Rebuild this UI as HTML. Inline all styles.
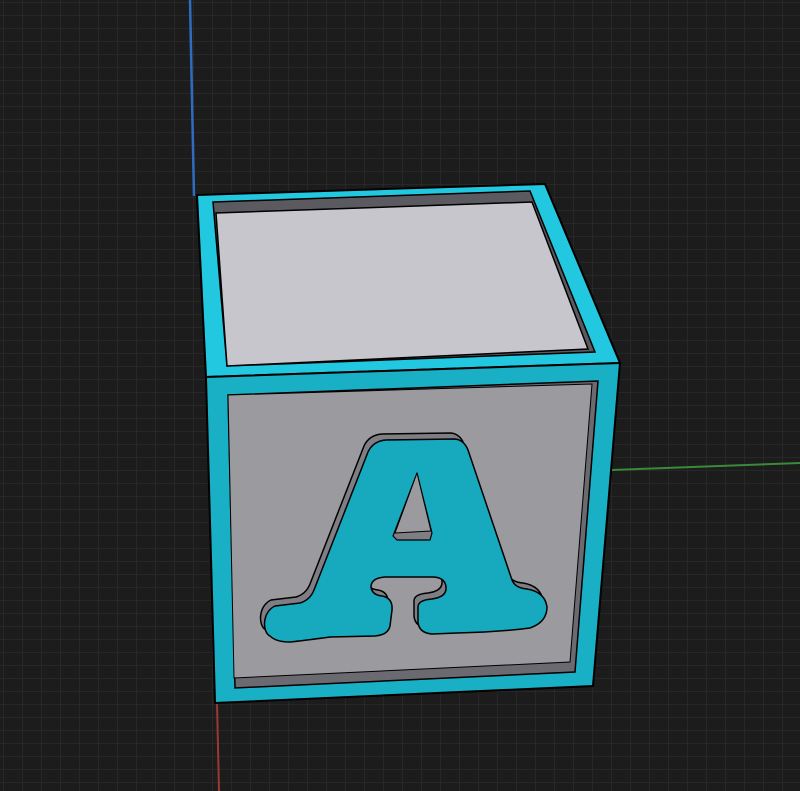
<!DOCTYPE html>
<html><head><style>html,body{margin:0;padding:0;background:#1c1c1c;}svg{display:block}</style></head>
<body>
<svg width="800" height="791" viewBox="0 0 800 791" xmlns="http://www.w3.org/2000/svg">
<defs>
<pattern id="g" width="19" height="13" patternUnits="userSpaceOnUse" x="3" y="2">
<path d="M0 0H19M0 0V13" stroke="#323232" stroke-width="1" fill="none"/>
</pattern>
<path id="A" d="M270,636 C262,632 262,612 275,606 L300,603 Q310,600 314,590 L368,452 Q373,441 386,440 L455,439 Q464,440 468,450 L512,580 Q515,588 527,589 Q545,592 547,607 Q547,622 530,628 Q500,632 457,633 L432,634 Q419,633 418,622 L418,607 Q418,600 432,599 Q447,597 446,587 Q445,577 432,577 L385,577 Q371,578 371,587 Q372,595 382,596 Q393,598 392,610 L390,626 Q388,635 375,636 L330,637 Q300,641 290,642 Q276,642 270,636 Z"/>
</defs>
<rect width="800" height="791" fill="#1c1c1c"/>
<rect width="800" height="791" fill="url(#g)"/>
<line x1="190" y1="0" x2="194" y2="196" stroke="#2f6cc0" stroke-width="2.5"/>
<line x1="217" y1="703" x2="219" y2="791" stroke="#9a3a35" stroke-width="2"/>
<line x1="612" y1="470" x2="800" y2="463" stroke="#3a8a3a" stroke-width="2"/>

<polygon points="197,195 545,184 620,363 206,377" fill="#22c8e0" stroke="#000" stroke-width="2"/>
<polygon points="213,202 530,191 595,352 227,366" fill="#5a5a60" stroke="#000" stroke-width="1.5"/>
<polygon points="216,213 532,202 588,349 227,366" fill="#c6c6cc" stroke="#000" stroke-width="1.5"/>
<polygon points="206,377 620,363 593,686 215,703" fill="#19b0c6" stroke="#000" stroke-width="2"/>
<polygon points="228,395 598,381 575,672 235,688" fill="#6a6a70" stroke="#000" stroke-width="1.5"/>
<polygon points="228,395 592,384 570,662 234,678" fill="#9a9a9f" stroke="#000" stroke-width="1"/>

<use href="#A" transform="translate(-4,-6)" fill="#7e7e84" stroke="#000" stroke-width="1.5"/>
<use href="#A" fill="#17a9bd" stroke="#000" stroke-width="1.5"/>
<polygon points="417,473 432,533 430,540 397,540 393,536" fill="#7e7e84" stroke="#000" stroke-width="1.2" stroke-linejoin="round"/>
<polygon points="417,473 431,531 395,533" fill="#9a9a9f" stroke="#000" stroke-width="1" stroke-linejoin="round"/>
</svg>
</body></html>
